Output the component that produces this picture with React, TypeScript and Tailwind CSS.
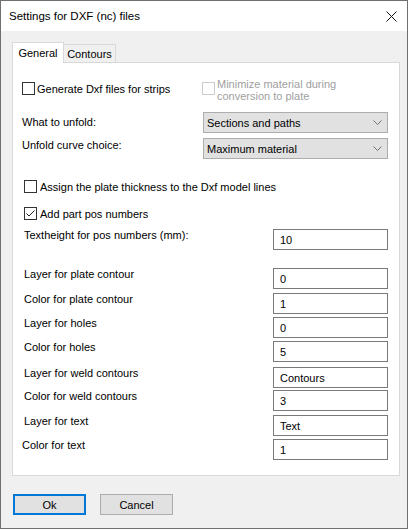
import React from "react";

const uiFont = { fontFamily: '"Liberation Sans", Arial, sans-serif' };

function Checkbox({ checked = false, disabled = false }: { checked?: boolean; disabled?: boolean }) {
  return (
    <span
      className={`flex h-[13px] w-[13px] shrink-0 items-center justify-center border bg-white ${
        disabled ? "border-[#cccccc]" : "border-[#333333]"
      }`}
    >
      {checked && (
        <svg width="11" height="11" viewBox="0 0 11 11">
          <path d="M1.5 5.5 L4 8 L9.5 2.5" fill="none" stroke="#222" strokeWidth="1" />
        </svg>
      )}
    </span>
  );
}

function Select({ value }: { value: string }) {
  return (
    <div className="flex h-[21px] w-[185px] shrink-0 items-center justify-between border border-[#adadad] bg-[#e1e1e1] pl-[3px] pr-[5px]">
      <span>{value}</span>
      <svg width="9" height="5" viewBox="0 0 9 5">
        <path d="M0.5 0.5 L4.5 4.5 L8.5 0.5" fill="none" stroke="#707070" strokeWidth="1" />
      </svg>
    </div>
  );
}

function Field({
  label,
  value,
  className = "",
  labelClass = "ml-[2px]",
}: {
  label: string;
  value: string;
  className?: string;
  labelClass?: string;
}) {
  return (
    <div className={`flex h-[21px] items-start justify-between ${className}`}>
      <span className={`-mt-[1px] leading-[14px] ${labelClass}`}>{label}</span>
      <div className="flex h-[21px] w-[115px] shrink-0 items-center border border-[#7a7a7a] bg-white px-[6px]">
        {value}
      </div>
    </div>
  );
}

export default function App() {
  return (
    <div
      className="flex h-[529px] w-[408px] flex-col border border-[#707070] bg-[#f0f0f0] text-[11px] leading-[14px] text-black"
      style={uiFont}
    >
      {/* title bar */}
      <div className="flex h-[30px] shrink-0 items-center justify-between bg-white pl-[8px] pr-[10px]">
        <span className="text-[11.5px]">Settings for DXF (nc) files</span>
        <svg width="11" height="11" viewBox="0 0 11 11">
          <path d="M0.5 0.5 L10.5 10.5 M10.5 0.5 L0.5 10.5" stroke="#111" strokeWidth="1" />
        </svg>
      </div>

      <div className="flex flex-1 flex-col pl-[11px] pr-[7px] pt-[11px]">
        {/* tabs */}
        <div className="relative z-10 flex h-[20px] items-end">
          <div className="flex h-[21px] w-[52px] items-center justify-center self-start border border-b-0 border-[#d9d9d9] bg-white">
            General
          </div>
          <div className="flex h-[18px] w-[52px] items-center justify-center border border-b-0 border-l-0 border-[#d9d9d9] bg-[#f0f0f0]">
            Contours
          </div>
        </div>

        {/* tab page */}
        <div className="flex h-[414px] flex-col border border-[#d9d9d9] bg-white pl-[9px] pr-[11px]">
          <div className="mt-[14px] flex h-[26px]">
            <label className="mt-[5px] flex h-[13px] w-[180px] items-center gap-[2px]">
              <Checkbox />
              <span>Generate Dxf files for strips</span>
            </label>
            <label className="flex items-start gap-[2px] text-[#a0a0a0]">
              <span className="mt-[5px]">
                <Checkbox disabled />
              </span>
              <span className="mt-[1px] leading-[12px]">
                Minimize material during
                <br />
                conversion to plate
              </span>
            </label>
          </div>

          <div className="mt-[9px] flex h-[21px] items-center justify-between">
            <span className="-mt-[1px]">What to unfold:</span>
            <Select value="Sections and paths" />
          </div>
          <div className="mt-[5px] flex h-[21px] items-start justify-between">
            <span>Unfold curve choice:</span>
            <Select value="Maximum material" />
          </div>

          <label className="ml-[2px] mt-[21px] flex h-[13px] items-center gap-[3px]">
            <Checkbox />
            <span>Assign the plate thickness to the Dxf model lines</span>
          </label>
          <label className="ml-[2px] mt-[14px] flex h-[13px] items-center gap-[3px]">
            <Checkbox checked />
            <span>Add part pos numbers</span>
          </label>

          <Field className="mt-[9px]" label="Textheight for pos numbers (mm):" value="10" />
          <Field className="mt-[18px]" label="Layer for plate contour" value="0" />
          <Field className="mt-[4px]" label="Color for plate contour" value="1" />
          <Field className="mt-[3px]" label="Layer for holes" value="0" />
          <Field className="mt-[3px]" label="Color for holes" value="5" />
          <Field className="mt-[5px]" label="Layer for weld contours" value="Contours" />
          <Field className="mt-[2px]" label="Color for weld contours" value="3" />
          <Field className="mt-[4px]" label="Layer for text" value="Text" />
          <Field className="mt-[3px]" label="Color for text" value="1" labelClass="" />
        </div>

        {/* buttons */}
        <div className="mt-[18px] flex gap-[14px] pl-[1px]">
          <button className="h-[21px] w-[73px] border-2 border-[#0078d7] bg-[#e1e1e1]">Ok</button>
          <button className="h-[21px] w-[73px] border border-[#adadad] bg-[#e1e1e1]">Cancel</button>
        </div>
      </div>
    </div>
  );
}
